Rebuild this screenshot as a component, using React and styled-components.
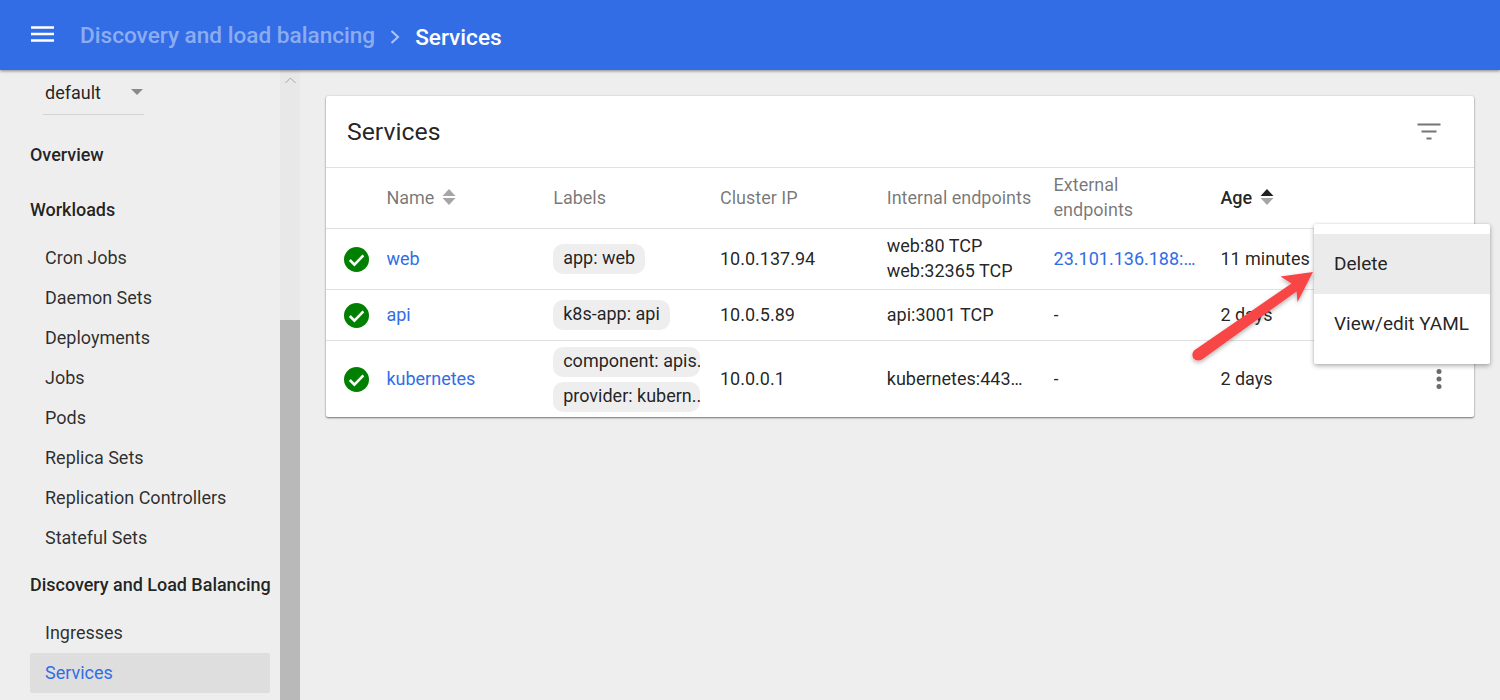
import React from "react"
import styled, { createGlobalStyle } from "styled-components"

const GlobalStyle = createGlobalStyle`
  html, body {
    margin: 0;
    padding: 0;
    background: #eeeeee;
    font-family: Roboto, "Liberation Sans", sans-serif;
    color: rgba(0, 0, 0, 0.87);
    overflow: hidden;
  }
  * { box-sizing: border-box; }
`

const Page = styled.div`
  width: 1500px;
  height: 700px;
  overflow: hidden;
  position: relative;
  display: flex;
  flex-direction: column;
`

const Toolbar = styled.header`
  height: 70px;
  flex: none;
  background: #326de6;
  display: flex;
  align-items: center;
  padding: 0 0 0 31px;
  box-shadow: 0 1px 3px rgba(0, 0, 0, 0.45);
  position: relative;
  z-index: 2;
`

const Burger = styled.svg`
  width: 23px;
  height: 16px;
  margin-right: 26px;
  margin-top: -2px;
`

const Crumb = styled.span`
  font-size: 22.6px;
  font-weight: 500;
  color: ${p => (p.$current ? "#ffffff" : "rgba(255,255,255,0.45)")};
  margin-top: ${p => (p.$current ? "4px" : "1px")};
`

const Chevron = styled.svg`
  width: 10px;
  height: 16px;
  margin: 3px 15px 0 15px;
`

const Body = styled.div`
  flex: 1;
  display: flex;
  min-height: 0;
`

const Sidebar = styled.nav`
  width: 280px;
  flex: none;
  padding: 10px 10px 0 30px;
  overflow: hidden;
`

const Select = styled.div`
  width: 101px;
  height: 35px;
  margin-left: 13px;
  padding: 0 1px 10px 2px;
  border-bottom: 1px solid #d4d4d4;
  display: flex;
  justify-content: space-between;
  align-items: center;
  font-size: 18px;
`

const Caret = styled.span`
  width: 0;
  height: 0;
  border-left: 6px solid transparent;
  border-right: 6px solid transparent;
  border-top: 6px solid #8a8a8a;
`

const SectionTitle = styled.div`
  height: 40px;
  line-height: 40px;
  font-size: 18px;
  font-weight: 500;
  white-space: nowrap;
  margin-top: ${p => p.$top}px;
  letter-spacing: -0.03px;
`

const NavItem = styled.div`
  height: 40px;
  line-height: 40px;
  padding-left: 15px;
  font-size: 18px;
  border-radius: 2px;
  color: ${p => (p.$active ? "#326de6" : "rgba(0,0,0,0.82)")};
  background: ${p => (p.$active ? "#dedede" : "transparent")};
`

const NavGroup = styled.div`
  margin-top: ${p => p.$top}px;
`

const Scrollbar = styled.div`
  width: 20px;
  flex: none;
  background: #e8e8e8;
  display: flex;
  flex-direction: column;
  justify-content: space-between;
  align-items: center;
`

const ScrollUp = styled.svg`
  width: 11px;
  height: 7px;
  margin-top: 7px;
`

const ScrollThumb = styled.div`
  width: 20px;
  height: 380px;
  background: #b9b9b9;
`

const Main = styled.main`
  flex: 1;
  padding: 26px 26px 0 26px;
`

const Card = styled.section`
  background: #ffffff;
  border-radius: 2px;
  box-shadow: 0 1px 2px rgba(0, 0, 0, 0.5), 0 0 2px rgba(0, 0, 0, 0.12);
`

const CardHeader = styled.div`
  height: 72px;
  display: flex;
  align-items: center;
  justify-content: space-between;
  padding: 0 33px 0 21px;
  border-bottom: 1px solid #e1e1e1;
`

const CardTitle = styled.h1`
  margin: 0;
  font-size: 24.8px;
  font-weight: 400;
`

const Row = styled.div`
  display: grid;
  grid-template-columns: 60.4px repeat(5, 166.8px) 1fr;
  align-items: center;
  height: ${p => p.$height}px;
  font-size: 18px;
  border-bottom: ${p => (p.$last ? "none" : "1px solid #e1e1e1")};
`

const HeadCell = styled.div`
  color: ${p => (p.$sorted ? "rgba(0,0,0,0.87)" : "rgba(0,0,0,0.54)")};
  font-weight: ${p => (p.$sorted ? 500 : 400)};
  line-height: 25px;
  padding: 0 20px 2px 0;
  display: flex;
  align-items: center;
  gap: 8px;
`

const Cell = styled.div`
  line-height: 25px;
  white-space: nowrap;
  overflow: hidden;
  min-width: 0;
  padding: 0 ${p => p.$pad || 0}px 2px 0;
  text-overflow: ellipsis;
`

const LabelCell = styled.div`
  min-width: 0;
`

const LastCell = styled(Cell)`
  display: flex;
  justify-content: space-between;
  align-items: center;
  padding: 0 32px 2px 0;
  overflow: visible;
`

const StatusCell = styled.div`
  display: flex;
  justify-content: center;
`

const Link = styled.a`
  color: #326de6;
  text-decoration: none;
`

const Labels = styled.div`
  display: flex;
  flex-direction: column;
  gap: 5px;
  align-items: flex-start;
  width: 147px;
`

const Chip = styled.span`
  display: block;
  max-width: 147px;
  height: 30px;
  line-height: 28px;
  padding: 0 ${p => (p.$clipped ? 0 : 10)}px 0 10px;
  background: #eeeeee;
  border-radius: 10px;
  white-space: nowrap;
  overflow: hidden;
  width: ${p => (p.$clipped ? "147px" : "auto")};
`

const Kebab = styled.svg`
  width: 6px;
  height: 20px;
  margin-top: 2px;
`

const Menu = styled.div`
  position: absolute;
  left: 1314px;
  top: 224px;
  width: 176px;
  height: 140px;
  padding: 10px 0;
  background: #ffffff;
  border-radius: 2px;
  box-shadow: 0 2px 5px rgba(0, 0, 0, 0.3), 0 0 2px rgba(0, 0, 0, 0.12);
  z-index: 3;
`

const MenuItem = styled.div`
  height: 60px;
  line-height: 60px;
  padding-left: 20px;
  font-size: 19px;
  background: ${p => (p.$hover ? "#ebebeb" : "transparent")};
`

const Arrow = styled.svg`
  position: absolute;
  left: 1180px;
  top: 260px;
  width: 140px;
  height: 110px;
  z-index: 4;
  overflow: visible;
`

const SortIcon = ({ active }) => (
  <svg width="14" height="18" viewBox="0 0 14 18">
    <path d="M7 1 L13.5 8 H0.5 Z" fill={active ? "#222222" : "#a6a6a6"} />
    <path d="M7 17 L13.5 10 H0.5 Z" fill="#a6a6a6" />
  </svg>
)

const StatusIcon = () => (
  <svg width="25" height="25" viewBox="0 0 25 25">
    <circle cx="12.5" cy="12.5" r="12.5" fill="#008000" />
    <path d="M5.8 13 L10.4 17.6 L19.4 8.4" fill="none" stroke="#ffffff" strokeWidth="2.6" />
  </svg>
)

const workloads = ["Cron Jobs", "Daemon Sets", "Deployments", "Jobs", "Pods", "Replica Sets", "Replication Controllers", "Stateful Sets"]

const App = () => {
  return (
    <Page>
      <GlobalStyle />
      <Toolbar>
        <Burger viewBox="0 0 23 16">
          <path d="M0 1.5 H23 M0 8 H23 M0 14.5 H23" stroke="#ffffff" strokeWidth="2.6" />
        </Burger>
        <Crumb>Discovery and load balancing</Crumb>
        <Chevron viewBox="0 0 10 16">
          <path d="M1.5 2 L8 8 L1.5 14" fill="none" stroke="rgba(255,255,255,0.6)" strokeWidth="2" />
        </Chevron>
        <Crumb $current>Services</Crumb>
      </Toolbar>

      <Body>
        <Sidebar>
          <Select>
            default
            <Caret />
          </Select>
          <SectionTitle $top={20}>Overview</SectionTitle>
          <SectionTitle $top={15}>Workloads</SectionTitle>
          <NavGroup $top={8}>
            {workloads.map(item => (
              <NavItem key={item}>{item}</NavItem>
            ))}
          </NavGroup>
          <SectionTitle $top={7}>Discovery and Load Balancing</SectionTitle>
          <NavGroup $top={8}>
            <NavItem>Ingresses</NavItem>
            <NavItem $active>Services</NavItem>
          </NavGroup>
        </Sidebar>
        <Scrollbar>
          <ScrollUp viewBox="0 0 11 7">
            <path d="M0.5 6 L5.5 1 L10.5 6" fill="none" stroke="#a5a5a5" strokeWidth="1" />
          </ScrollUp>
          <ScrollThumb />
        </Scrollbar>

        <Main>
          <Card>
            <CardHeader>
              <CardTitle>Services</CardTitle>
              <svg width="24" height="18" viewBox="0 0 24 18">
                <path d="M0.5 1.5 H23.5 M4.5 8.5 H19.5 M9.5 15.5 H14.5" stroke="#757575" strokeWidth="2.2" />
              </svg>
            </CardHeader>

            <Row $height={61}>
              <div />
              <HeadCell>Name <SortIcon /></HeadCell>
              <HeadCell>Labels</HeadCell>
              <HeadCell>Cluster IP</HeadCell>
              <HeadCell>Internal endpoints</HeadCell>
              <HeadCell>External endpoints</HeadCell>
              <HeadCell $sorted>Age <SortIcon active /></HeadCell>
            </Row>

            <Row $height={61}>
              <StatusCell><StatusIcon /></StatusCell>
              <Cell><Link>web</Link></Cell>
              <LabelCell><Labels><Chip>app: web</Chip></Labels></LabelCell>
              <Cell>10.0.137.94</Cell>
              <Cell>web:80 TCP<br />web:32365 TCP</Cell>
              <Cell $pad={20}><Link>23.101.136.188:…</Link></Cell>
              <LastCell>11 minutes</LastCell>
            </Row>

            <Row $height={51}>
              <StatusCell><StatusIcon /></StatusCell>
              <Cell><Link>api</Link></Cell>
              <LabelCell><Labels><Chip>k8s-app: api</Chip></Labels></LabelCell>
              <Cell>10.0.5.89</Cell>
              <Cell>api:3001 TCP</Cell>
              <Cell>-</Cell>
              <LastCell>2 days</LastCell>
            </Row>

            <Row $height={76} $last>
              <StatusCell><StatusIcon /></StatusCell>
              <Cell><Link>kubernetes</Link></Cell>
              <LabelCell>
                <Labels>
                  <Chip $clipped>component: apis.</Chip>
                  <Chip $clipped>provider: kubern..</Chip>
                </Labels>
              </LabelCell>
              <Cell>10.0.0.1</Cell>
              <Cell>kubernetes:443…</Cell>
              <Cell>-</Cell>
              <LastCell>
                2 days
                <Kebab viewBox="0 0 6 20">
                  <circle cx="3" cy="2.5" r="2.5" fill="#6b6b6b" />
                  <circle cx="3" cy="10" r="2.5" fill="#6b6b6b" />
                  <circle cx="3" cy="17.5" r="2.5" fill="#6b6b6b" />
                </Kebab>
              </LastCell>
            </Row>
          </Card>
        </Main>
      </Body>

      <Menu>
        <MenuItem $hover>Delete</MenuItem>
        <MenuItem>View/edit YAML</MenuItem>
      </Menu>

      <Arrow viewBox="0 0 140 110">
        <defs>
          <filter id="arrowShadow" x="-20%" y="-20%" width="140%" height="140%">
            <feDropShadow dx="0" dy="2" stdDeviation="2" floodColor="#000000" floodOpacity="0.3" />
          </filter>
        </defs>
        <path
          d="M133 12 L100.5 16.5 L111.5 23.5 L14 90.5 Q11 94.5 13.5 98.5 Q17 102 22 99.5 L116.5 31.5 L117.5 42 Z"
          fill="#f84545"
          filter="url(#arrowShadow)"
        />
      </Arrow>
    </Page>
  )
}

export default App
